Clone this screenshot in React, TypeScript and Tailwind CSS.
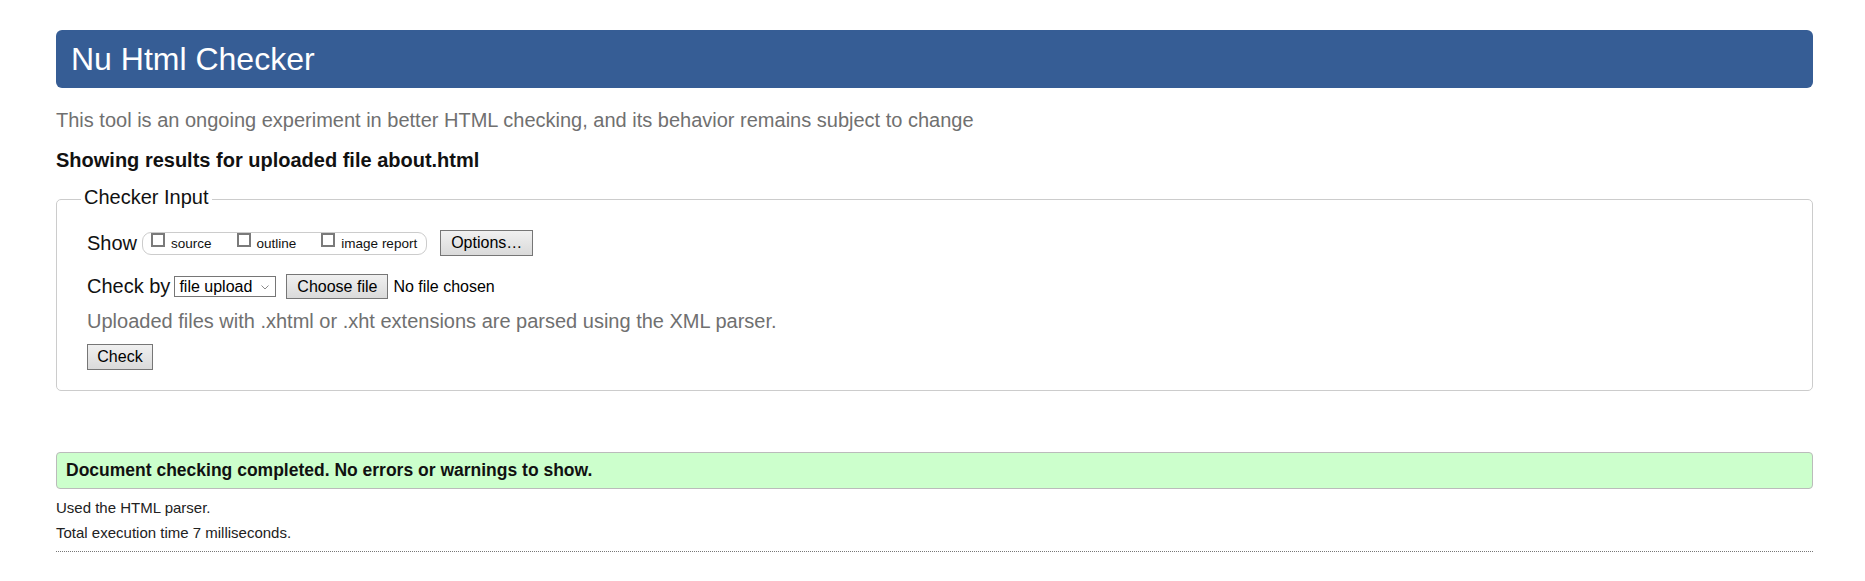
import React from "react";

function Checkbox({ label, last }: { label: string; last?: boolean }) {
  return (
    <div className={"flex items-start " + (last ? "" : "mr-[25px]")}>
      <span className="block w-[14px] h-[14px] border-2 border-[#7a7a7a] bg-white" />
      <span className="ml-[6px] mt-[3px] text-[13.5px] leading-[16px] text-[#111]">{label}</span>
    </div>
  );
}

function Btn({ children, className }: { children: React.ReactNode; className?: string }) {
  return (
    <div
      className={
        "flex items-center justify-center border border-[#767676] bg-linear-to-b from-[#f0f0f0] to-[#dadada] text-[16px] text-black leading-none " +
        (className || "")
      }
    >
      {children}
    </div>
  );
}

export default function App() {
  return (
    <div className="min-h-[581px] bg-white pt-[30px] pl-[56px] pr-[52px] font-['Liberation_Sans',Arial,sans-serif] text-[#222]">
      <h1 className="h-[58px] rounded-[6px] bg-[#365d95] text-white text-[32px] leading-none flex items-center pl-[15px] font-normal">
        Nu Html Checker
      </h1>
      <p className="mt-[21px] text-[20px] leading-[23px] text-[#707070]">
        This tool is an ongoing experiment in better HTML checking, and its behavior remains subject to change
      </p>
      <p className="mt-[17px] text-[20px] leading-[23px] font-bold text-[#111]">
        Showing results for uploaded file about.html
      </p>
      <fieldset className="mt-[14px] border border-[#cccccc] rounded-[5px] pl-[30px] pr-[20px] pt-[17px] pb-[20px]">
        <legend className="ml-[-6px] px-[3px] pb-[4px] text-[20px] leading-[23px] text-[#111]">Checker Input</legend>
        <div className="flex items-center h-[26px]">
          <span className="text-[20px] leading-[23px] text-[#111]">Show</span>
          <div className="ml-[5px] flex items-start h-[23px] border border-[#cccccc] rounded-[9px] pl-[8px] pr-[9px]">
            <Checkbox label="source" />
            <Checkbox label="outline" />
            <Checkbox label="image report" last />
          </div>
          <Btn className="ml-[13px] h-[26px] px-[10px]">Options…</Btn>
        </div>
        <div className="mt-[18px] flex items-center h-[25px]">
          <span className="text-[20px] leading-[23px] text-[#111]">Check by</span>
          <div className="ml-[4px] w-[102px] h-[21px] border border-[#767676] bg-white flex items-center pl-[4px] pr-[6px] text-[16px] text-black leading-none">
            <span className="flex-1">file upload</span>
            <svg width="8" height="5" viewBox="0 0 8 5" className="mt-[1px]">
              <path d="M0.5 0.5 L4 4 L7.5 0.5" fill="none" stroke="#8a8a8a" strokeWidth="1" />
            </svg>
          </div>
          <Btn className="ml-[10px] w-[102px] h-[25px]">Choose file</Btn>
          <span className="ml-[5px] text-[16px] text-black">No file chosen</span>
        </div>
        <p className="mt-[11px] text-[20px] leading-[23px] text-[#707070]">
          Uploaded files with .xhtml or .xht extensions are parsed using the XML parser.
        </p>
        <div className="mt-[11px] flex">
          <Btn className="w-[66px] h-[26px]">Check</Btn>
        </div>
      </fieldset>
      <div className="mt-[61px] h-[37px] border border-[#bbbbbb] rounded-[4px] bg-[#ccffcc] pl-[9px] flex items-center font-bold text-[17.5px] text-[#111]">
        Document checking completed. No errors or warnings to show.
      </div>
      <p className="mt-[6px] text-[15px] leading-[25px] text-[#222]">Used the HTML parser.</p>
      <p className="text-[15px] leading-[25px] text-[#222]">Total execution time 7 milliseconds.</p>
      <div className="mt-[6px] border-t border-dotted border-[#777]" />
    </div>
  );
}
